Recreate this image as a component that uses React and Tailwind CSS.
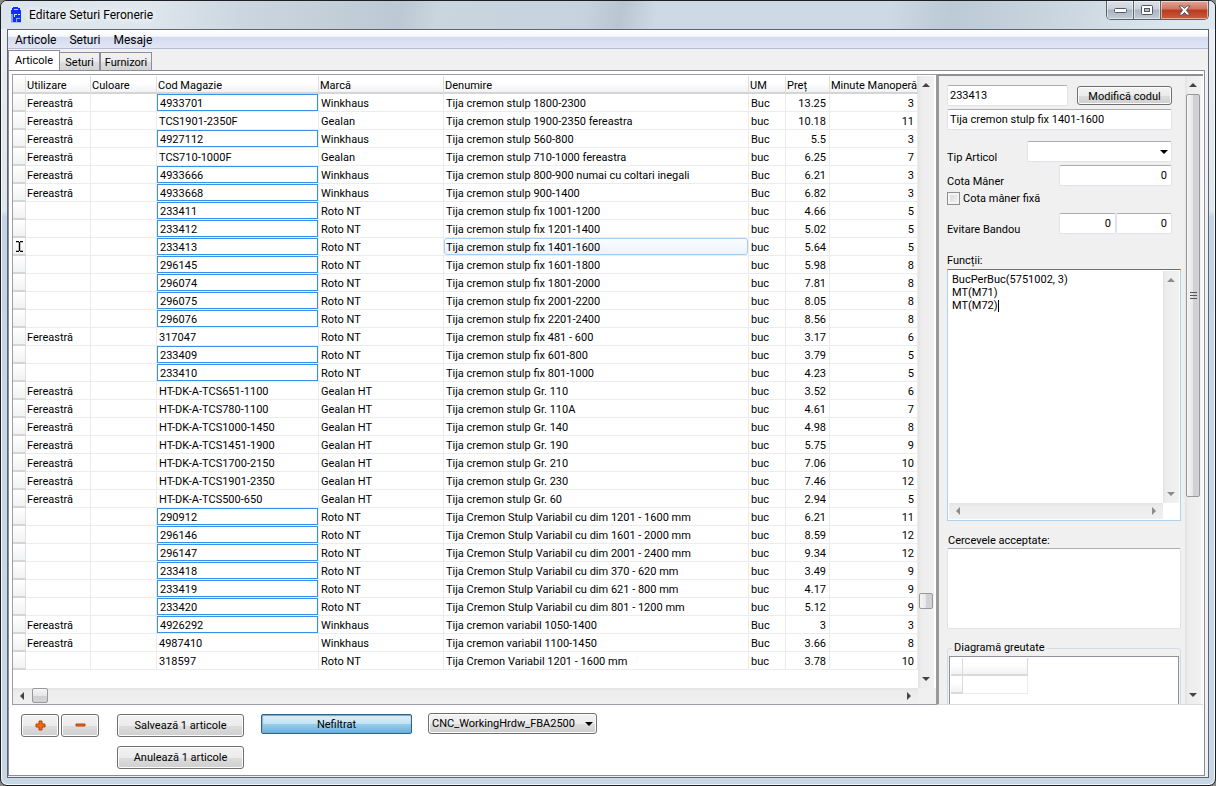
const F = "Fereastră";
const rows = [
  [F, "4933701", "Winkhaus", "Tija cremon stulp 1800-2300", "Buc", "13.25", 3, true],
  [F, "TCS1901-2350F", "Gealan", "Tija cremon stulp 1900-2350 fereastra", "buc", "10.18", 11, false],
  [F, "4927112", "Winkhaus", "Tija cremon stulp 560-800", "Buc", "5.5", 3, true],
  [F, "TCS710-1000F", "Gealan", "Tija cremon stulp 710-1000 fereastra", "buc", "6.25", 7, false],
  [F, "4933666", "Winkhaus", "Tija cremon stulp 800-900 numai cu coltari inegali", "Buc", "6.21", 3, true],
  [F, "4933668", "Winkhaus", "Tija cremon stulp 900-1400", "Buc", "6.82", 3, true],
  ["", "233411", "Roto NT", "Tija cremon stulp fix 1001-1200", "buc", "4.66", 5, true],
  ["", "233412", "Roto NT", "Tija cremon stulp fix 1201-1400", "buc", "5.02", 5, true],
  ["", "233413", "Roto NT", "Tija cremon stulp fix 1401-1600", "buc", "5.64", 5, true],
  ["", "296145", "Roto NT", "Tija cremon stulp fix 1601-1800", "buc", "5.98", 8, true],
  ["", "296074", "Roto NT", "Tija cremon stulp fix 1801-2000", "buc", "7.81", 8, true],
  ["", "296075", "Roto NT", "Tija cremon stulp fix 2001-2200", "buc", "8.05", 8, true],
  ["", "296076", "Roto NT", "Tija cremon stulp fix 2201-2400", "buc", "8.56", 8, true],
  [F, "317047", "Roto NT", "Tija cremon stulp fix 481 - 600", "buc", "3.17", 6, false],
  ["", "233409", "Roto NT", "Tija cremon stulp fix 601-800", "buc", "3.79", 5, true],
  ["", "233410", "Roto NT", "Tija cremon stulp fix 801-1000", "buc", "4.23", 5, true],
  [F, "HT-DK-A-TCS651-1100", "Gealan HT", "Tija cremon stulp Gr. 110", "buc", "3.52", 6, false],
  [F, "HT-DK-A-TCS780-1100", "Gealan HT", "Tija cremon stulp Gr. 110A", "buc", "4.61", 7, false],
  [F, "HT-DK-A-TCS1000-1450", "Gealan HT", "Tija cremon stulp Gr. 140", "buc", "4.98", 8, false],
  [F, "HT-DK-A-TCS1451-1900", "Gealan HT", "Tija cremon stulp Gr. 190", "buc", "5.75", 9, false],
  [F, "HT-DK-A-TCS1700-2150", "Gealan HT", "Tija cremon stulp Gr. 210", "buc", "7.06", 10, false],
  [F, "HT-DK-A-TCS1901-2350", "Gealan HT", "Tija cremon stulp Gr. 230", "buc", "7.46", 12, false],
  [F, "HT-DK-A-TCS500-650", "Gealan HT", "Tija cremon stulp Gr. 60", "buc", "2.94", 5, false],
  ["", "290912", "Roto NT", "Tija Cremon Stulp Variabil cu dim 1201 - 1600 mm", "buc", "6.21", 11, true],
  ["", "296146", "Roto NT", "Tija Cremon Stulp Variabil cu dim 1601 - 2000 mm", "buc", "8.59", 12, true],
  ["", "296147", "Roto NT", "Tija Cremon Stulp Variabil cu dim 2001 - 2400 mm", "buc", "9.34", 12, true],
  ["", "233418", "Roto NT", "Tija Cremon Stulp Variabil cu dim 370 - 620 mm", "buc", "3.49", 9, true],
  ["", "233419", "Roto NT", "Tija Cremon Stulp Variabil cu dim 621 - 800 mm", "buc", "4.17", 9, true],
  ["", "233420", "Roto NT", "Tija Cremon Stulp Variabil cu dim 801 - 1200 mm", "buc", "5.12", 9, true],
  [F, "4926292", "Winkhaus", "Tija cremon variabil 1050-1400", "Buc", "3", 3, true],
  [F, "4987410", "Winkhaus", "Tija cremon variabil 1100-1450", "Buc", "3.66", 8, false],
  ["", "318597", "Roto NT", "Tija Cremon Variabil 1201 - 1600 mm", "buc", "3.78", 10, false],
];
const selectedCode = "233413";

const columns = [
  ["Utilizare", "w-[65px]"],
  ["Culoare", "w-[66px]"],
  ["Cod Magazie", "w-[162px]"],
  ["Marcă", "w-[125px]"],
  ["Denumire", ""],
  ["UM", "w-[37px]"],
  ["Preț", "w-[44px]"],
  ["Minute Manoperă", "w-[88px]"],
];

const buttonFace =
  "rounded-[3px] border border-[#707070] bg-[linear-gradient(#f3f3f3_0%,#ebebeb_50%,#dddddd_51%,#cfcfcf_100%)] shadow-[inset_0_0_0_1px_#fcfcfc]";
const field =
  "h-[21px] rounded-[2px] border border-[#e2e3ea] border-t-[#abadb3] bg-white px-0.5 pb-px outline-none";

function Arrow({ dir, faded }) {
  const paths = { up: "M0 4 4 0 8 4Z", down: "M0 0h8L4 4Z", left: "M4 0v8L0 4Z", right: "M0 0v8l4-4Z" };
  const wide = dir === "up" || dir === "down";
  return (
    <svg width={wide ? 8 : 4} height={wide ? 4 : 8} aria-hidden="true">
      <path d={paths[dir]} fill={faded ? "#8c8c8c" : "#444"} />
    </svg>
  );
}

function ScrollBar({ horizontal, faded, children }) {
  const cap = horizontal ? "h-full w-[18px]" : "h-[18px] w-full";
  return (
    <div
      className={
        horizontal
          ? "flex h-4 min-w-0 flex-1 bg-[linear-gradient(#e3e3e3,#ececec_20%,#f0f0f0)]"
          : "flex w-4 shrink-0 flex-col bg-[linear-gradient(90deg,#e3e3e3,#ededed_20%,#f1f1f1)]"
      }
    >
      <div className={"flex shrink-0 items-center justify-center " + cap}>
        <Arrow dir={horizontal ? "left" : "up"} faded={faded} />
      </div>
      <div className={"flex min-h-0 min-w-0 flex-1 " + (horizontal ? "" : "flex-col")}>{children}</div>
      <div className={"flex shrink-0 items-center justify-center " + cap}>
        <Arrow dir={horizontal ? "right" : "down"} faded={faded} />
      </div>
    </div>
  );
}

const thumbV =
  "mx-px rounded-[2px] border border-[#989898] bg-[linear-gradient(90deg,#f5f5f5,#e6e6e8_50%,#cfcfd3_55%,#d4d4d8)]";
const thumbH =
  "mb-px rounded-[2px] border border-[#989898] bg-[linear-gradient(#f5f5f5,#e6e6e8_50%,#cfcfd3_55%,#d4d4d8)]";

function AppIcon() {
  return (
    <svg width="12" height="16" viewBox="0 0 12 16" aria-hidden="true">
      <path d="M3 0h5v1h2v2h1v12H1V3h1V1h1Z" fill="#1030f8" />
      <path d="M4 2h4v1H4z" fill="#c4d4ff" />
      <path d="M1 7h2v8H1z" fill="#7f9cff" />
      <path d="M4 7h3v1H5v2H4zM8 7h2v1H8z" fill="#dfe8ff" />
      <path d="M6 11h1v4H6zM7 11h3v1H7z" fill="#8eabff" />
      <path d="M1 15h10v1H1z" fill="#a9bcff" />
    </svg>
  );
}

function TitleBar() {
  const control =
    "flex h-full items-center justify-center shadow-[inset_0_0_0_1px_rgba(255,255,255,0.5)] border-[#58606b]";
  const grey = " w-[27px] border-r bg-[linear-gradient(#dde3ea_0%,#c9d1da_45%,#a9b4c0_50%,#c3ccd6_100%)]";
  return (
    <header className="flex h-7 shrink-0 items-start justify-between">
      <div className="flex h-full items-center gap-[7px] pl-[3px]">
        <AppIcon />
        <h1 className="text-[12px] [text-shadow:0_0_6px_#fff,0_0_8px_#fff]">Editare Seturi Feronerie</h1>
      </div>
      <div className="flex h-[19px] overflow-hidden rounded-b-[5px] border border-t-0 border-[#58606b]">
        <button aria-label="Minimizare" className={control + grey}>
          <svg width="13" height="5" aria-hidden="true">
            <rect x="0.5" y="0.5" width="12" height="4" rx="1" fill="#fff" stroke="#535666" />
          </svg>
        </button>
        <button aria-label="Maximizare" className={control + grey}>
          <svg width="12" height="10" aria-hidden="true">
            <rect x="0.5" y="0.5" width="11" height="9" rx="1" fill="#fff" stroke="#535666" />
            <rect x="3.5" y="3.5" width="5" height="3" fill="#b4bfca" stroke="#535666" />
          </svg>
        </button>
        <button
          aria-label="Închidere"
          className={control + " w-[47px] bg-[linear-gradient(#e3a598_0%,#d0745f_45%,#b83a20_50%,#cf5a38_100%)]"}
        >
          <svg width="13" height="11" aria-hidden="true">
            <path
              d="M1 1h3.2L6.5 3.4 8.8 1H12L8.4 5.3 12 10H8.8L6.5 7.5 4.2 10H1L4.6 5.3Z"
              fill="#fff"
              stroke="#53586a"
            />
          </svg>
        </button>
      </div>
    </header>
  );
}

function ArticleTable() {
  const base = "border-r border-b border-[#ececec] whitespace-nowrap overflow-hidden ";
  const bare = base + "p-0";
  const pad = base + "pt-0.5 pb-0 pr-[3px] pl-0.5";
  const stub = "border-r border-b-2 border-r-[#e0e0e0] border-b-[#d5d5d5] bg-[linear-gradient(#fff,#f1f2f4)] p-0";
  return (
    <table className="w-full table-fixed border-separate border-spacing-0 leading-[15px]">
      <thead>
        <tr className="h-[18px]">
          <th className={stub + " w-[13px]"} aria-label="Rând" />
          {columns.map(([name, width]) => (
            <th
              key={name}
              className={
                "overflow-hidden border-r border-b-2 border-r-[#dedede] border-b-[#d5d5d5] bg-[linear-gradient(#fff_40%,#f1f2f4)] pt-1 pr-0 pb-0 pl-px text-left leading-3 font-normal whitespace-nowrap " +
                width
              }
            >
              {name}
            </th>
          ))}
        </tr>
      </thead>
      <tbody>
        {rows.map(([use, code, brand, name, unit, price, minutes, editable]) => {
          const current = code === selectedCode;
          return (
            <tr key={code} className="h-[18px]">
              <td className={stub}>
                {current && (
                  <svg className="mx-auto" width="7" height="11" aria-hidden="true">
                    <path d="M0 .5h3M4 .5h3M3.5 1v9M0 10.5h3M4 10.5h3" stroke="#000" strokeWidth="1.4" />
                  </svg>
                )}
              </td>
              <td className={base + "pt-0.5 pr-0 pb-0 pl-px"}>{use}</td>
              <td className={bare} />
              {editable ? (
                <td className={bare}>
                  <input
                    aria-label={"Cod Magazie " + code}
                    defaultValue={code}
                    className="block h-[17px] w-full border border-[#3a8fe8] bg-white px-0.5 pt-0.5 outline-none"
                  />
                </td>
              ) : (
                <td className={pad}>{code}</td>
              )}
              <td className={pad}>{brand}</td>
              {current ? (
                <td className={bare}>
                  <div className="h-[17px] rounded-[3px] border border-[#a9cdf2] bg-[linear-gradient(#fbfdff,#ebf4fd)] pt-px pl-px">
                    {name}
                  </div>
                </td>
              ) : (
                <td className={pad}>{name}</td>
              )}
              <td className={pad}>{unit}</td>
              <td className={pad + " text-right"}>{price}</td>
              <td className={pad + " text-right"}>{minutes}</td>
            </tr>
          );
        })}
      </tbody>
    </table>
  );
}

function DetailRow({ label, id, children }) {
  return (
    <div className="flex h-6 justify-between pr-[9px]">
      <label htmlFor={id} className="self-end leading-[14px]">
        {label}
      </label>
      <div className="flex">{children}</div>
    </div>
  );
}

function DetailPanel() {
  return (
    <aside className="flex w-[267px] shrink-0 border-t-2 border-b border-l-[3px] border-t-[#8f8f8f] border-b-[#dcdcdc] border-l-[#9a9a9a] bg-[#f0f0f0]">
      <form className="min-h-0 min-w-0 flex-1 overflow-hidden pt-[9px] pr-1 pl-2" onSubmit={(e) => e.preventDefault()}>
        <div className="flex items-center justify-between pr-[9px]">
          <input aria-label="Cod" defaultValue="233413" className={field + " w-[121px]"} />
          <button className={buttonFace + " h-[19px] w-[95px] pt-0.5"}>Modifică codul</button>
        </div>
        <div className="flex pt-[3px] pr-[9px] pb-[11px]">
          <input aria-label="Denumire" defaultValue="Tija cremon stulp fix 1401-1600" className={field + " w-full"} />
        </div>
        <DetailRow label="Tip Articol" id="tip">
          <div className="relative">
            <select id="tip" className={field + " w-[145px] appearance-none"}>
              <option value=""></option>
            </select>
            <svg className="pointer-events-none absolute top-[9px] right-1" width="8" height="4" aria-hidden="true">
              <path d="M0 0h8L4 4Z" />
            </svg>
          </div>
        </DetailRow>
        <DetailRow label="Cota Mâner" id="cota">
          <input id="cota" defaultValue="0" className={field + " w-[113px] pr-1 text-right"} />
        </DetailRow>
        <div className="flex h-6 items-start">
          <label className="flex h-[18px] items-center gap-[3px]">
            <input
              type="checkbox"
              className="size-[13px] appearance-none border border-[#8e8f8f] bg-[linear-gradient(135deg,#d3d5d9,#f6f6f6)] shadow-[inset_0_0_0_2px_#f4f4f4]"
            />
            <span className="pt-0.5 leading-4">Cota mâner fixă</span>
          </label>
        </div>
        <DetailRow label="Evitare Bandou" id="evitare">
          <input id="evitare" defaultValue="0" className={field + " w-[57px] pr-1 text-right"} />
          <input aria-label="Evitare Bandou 2" defaultValue="0" className={field + " w-14 pr-1 text-right"} />
        </DetailRow>
        <label htmlFor="functii" className="block pt-[15px] leading-[17px]">
          Funcții:
        </label>
        <div className="relative flex h-[252px] flex-col border border-[#a9d3ee] border-t-[#3d7bad] bg-white p-px">
          <div className="flex min-h-0 flex-1">
            <textarea
              id="functii"
              defaultValue={"BucPerBuc(5751002, 3)\nMT(M71)\nMT(M72)"}
              className="min-w-0 flex-1 resize-none overflow-hidden pt-0.5 pl-[3px] leading-[13px] whitespace-pre outline-none"
            />
            <ScrollBar faded />
          </div>
          <div className="flex pr-4">
            <ScrollBar horizontal faded />
          </div>
          <span className="absolute top-[30px] left-[50px] h-3 w-px bg-black" />
        </div>
        <label htmlFor="cercevele" className="block pt-3 pl-px leading-[15px]">
          Cercevele acceptate:
        </label>
        <textarea
          id="cercevele"
          className="block h-[81px] w-full resize-none rounded-[2px] border border-[#dfe3ec] border-t-[#abadb3] bg-white outline-none"
        />
        <fieldset className="mt-[11px] h-28 rounded-[3px] border border-[#d0dbe4] px-px">
          <legend className="ml-[3px] px-0.5 leading-4">Diagramă greutate</legend>
          <div className="h-24 border border-[#8f949c] bg-white p-px">
            <table className="w-[77px] table-fixed border-separate border-spacing-0" aria-label="Diagramă greutate">
              <thead>
                <tr className="h-[18px]">
                  <th className="w-3 border-r border-b-2 border-[#dadada] bg-[linear-gradient(#fff_40%,#f1f2f4)]" />
                  <th className="border-r border-b-2 border-[#dadada] bg-[linear-gradient(#fff_40%,#f1f2f4)]" />
                </tr>
              </thead>
              <tbody>
                <tr className="h-[18px]">
                  <td className="border-r border-b-2 border-[#dadada] bg-[linear-gradient(#fff_40%,#f1f2f4)]" />
                  <td className="border-r border-b border-[#ececec]" />
                </tr>
              </tbody>
            </table>
          </div>
        </fieldset>
      </form>
      <ScrollBar>
        <div className={thumbV + " flex grow-[402] flex-col items-center justify-center gap-0.5"}>
          <span className="h-px w-[7px] bg-[#555]" />
          <span className="h-px w-[7px] bg-[#555]" />
          <span className="h-px w-[7px] bg-[#555]" />
        </div>
        <div className="grow-[193]" />
      </ScrollBar>
      <div className="w-0.5 bg-[#f8f8f8]" />
    </aside>
  );
}

function Footer() {
  const tall = buttonFace + " h-[23px]";
  return (
    <footer className="flex items-start px-3 pt-[9px] pb-1.5">
      <div className="flex gap-0.5">
        <button aria-label="Adaugă" className={tall + " flex w-[38px] items-center justify-center"}>
          <svg width="11" height="11" aria-hidden="true">
            <path d="M4 1h3v3h3v3H7v3H4V7H1V4h3Z" fill="#f26a10" stroke="#b8410c" />
          </svg>
        </button>
        <button aria-label="Șterge" className={tall + " flex w-[38px] items-center justify-center"}>
          <svg width="11" height="5" aria-hidden="true">
            <path d="M1 1h9v2H1Z" fill="#f26a10" stroke="#b8410c" />
          </svg>
        </button>
      </div>
      <div className="ml-[18px] flex w-[127px] flex-col gap-[9px]">
        <button className={tall + " pt-0.5"}>Salvează 1 articole</button>
        <button className={tall + " pt-0.5"}>Anulează 1 articole</button>
      </div>
      <button className="ml-[17px] h-5 w-[151px] rounded-[2px] border border-[#2c628b] bg-[linear-gradient(#e0f1fa_0%,#c2e2f4_48%,#98cdea_52%,#68b0da_100%)] pt-0.5 shadow-[inset_0_1px_1px_#7fa5bd,inset_1px_0_1px_#8fb4ca]">
        Nefiltrat
      </button>
      <div className="relative -mt-px ml-4">
        <select
          aria-label="Mașină CNC"
          className={buttonFace + " h-[21px] w-[169px] appearance-none px-[3px] pt-0.5 outline-none"}
        >
          <option>CNC_WorkingHrdw_FBA2500</option>
        </select>
        <svg className="pointer-events-none absolute top-[9px] right-1" width="8" height="4" aria-hidden="true">
          <path d="M0 0h8L4 4Z" />
        </svg>
      </div>
    </footer>
  );
}

export default function App() {
  const idleTab =
    "h-[18px] border border-b-0 border-[#8c8c9c] bg-[linear-gradient(#f2f2f2_0%,#ebebeb_50%,#dddddd_51%,#d3d3d3_100%)] pt-0.5";
  return (
    <div className="h-screen bg-[#8a8a8a] font-[Roboto,'Open_Sans',sans-serif] text-[11px] text-black">
      <div className="flex h-full flex-col rounded-[7px] border border-[#1c1f24] bg-[linear-gradient(#eef2f6_0px,#e2eaf0_100px,#dfe7ee_210px,#c5d2e4_216px,#c9d6e6_60%,#c7d7e5_100%)] shadow-[inset_0_0_0_1px_#f4f8fb]">
        <div className="flex min-h-0 flex-1 flex-col rounded-t-[6px] bg-[linear-gradient(100deg,#dce5ec_0%,#dfe7ee_12%,#cbd6e0_20%,#bcc8d3_33%,#c9d5df_36%,#c6d2dd_48%,#b9c5d1_51%,#cdd9e4_54%,#cdd9e4_73%,#bccad6_78%,#c8d4de_86%,#dce6ee_96%,#dfe8ef_100%)] bg-[length:100%_28px] bg-no-repeat px-1.5 pb-[7px]">
          <TitleBar />
          <main className="flex min-h-0 flex-1 flex-col border border-[#5e6673] bg-[#f0f0f0]">
            <nav className="flex h-[19px] shrink-0 items-center gap-[13px] border-b border-[#b4bcd4] bg-[linear-gradient(#fff_0%,#f6f8fc_35%,#d5dbee_40%,#e1e6f6_100%)] px-[7px] pt-0.5 text-[12px]">
              <button>Articole</button>
              <button>Seturi</button>
              <button>Mesaje</button>
            </nav>
            <div className="flex h-[21px] shrink-0 items-end" role="tablist">
              <button
                role="tab"
                aria-selected="true"
                className="h-5 border border-b-0 border-[#8c8c9c] bg-white px-1.5 pt-px"
              >
                Articole
              </button>
              <button role="tab" aria-selected="false" className={idleTab + " w-10 border-l-0"}>
                Seturi
              </button>
              <button role="tab" aria-selected="false" className={idleTab + " w-[52px]"}>
                Furnizori
              </button>
            </div>
            <section className="mr-[3px] mb-px flex min-h-0 flex-1 flex-col border border-[#8c8c9c] bg-white">
              <div className="flex min-h-0 flex-1 pt-[3px] pr-px pl-[3px]">
                <div className="flex min-w-0 flex-1 flex-col border border-r-0 border-[#9c9ca4] pt-px">
                  <div className="flex min-h-0 flex-1">
                    <div className="min-w-0 flex-1 overflow-hidden">
                      <ArticleTable />
                    </div>
                    <ScrollBar>
                      <div className="grow-[499]" />
                      <div className={thumbV + " h-4 shrink-0"} />
                      <div className="grow-[61]" />
                    </ScrollBar>
                    <div className="w-0.5 bg-white" />
                  </div>
                  <div className="flex bg-[#f0f0f0] pr-[18px]">
                    <ScrollBar horizontal>
                      <div className="w-px" />
                      <div className={thumbH + " w-4 shrink-0"} />
                    </ScrollBar>
                  </div>
                </div>
                <DetailPanel />
              </div>
              <Footer />
            </section>
          </main>
        </div>
      </div>
    </div>
  );
}
